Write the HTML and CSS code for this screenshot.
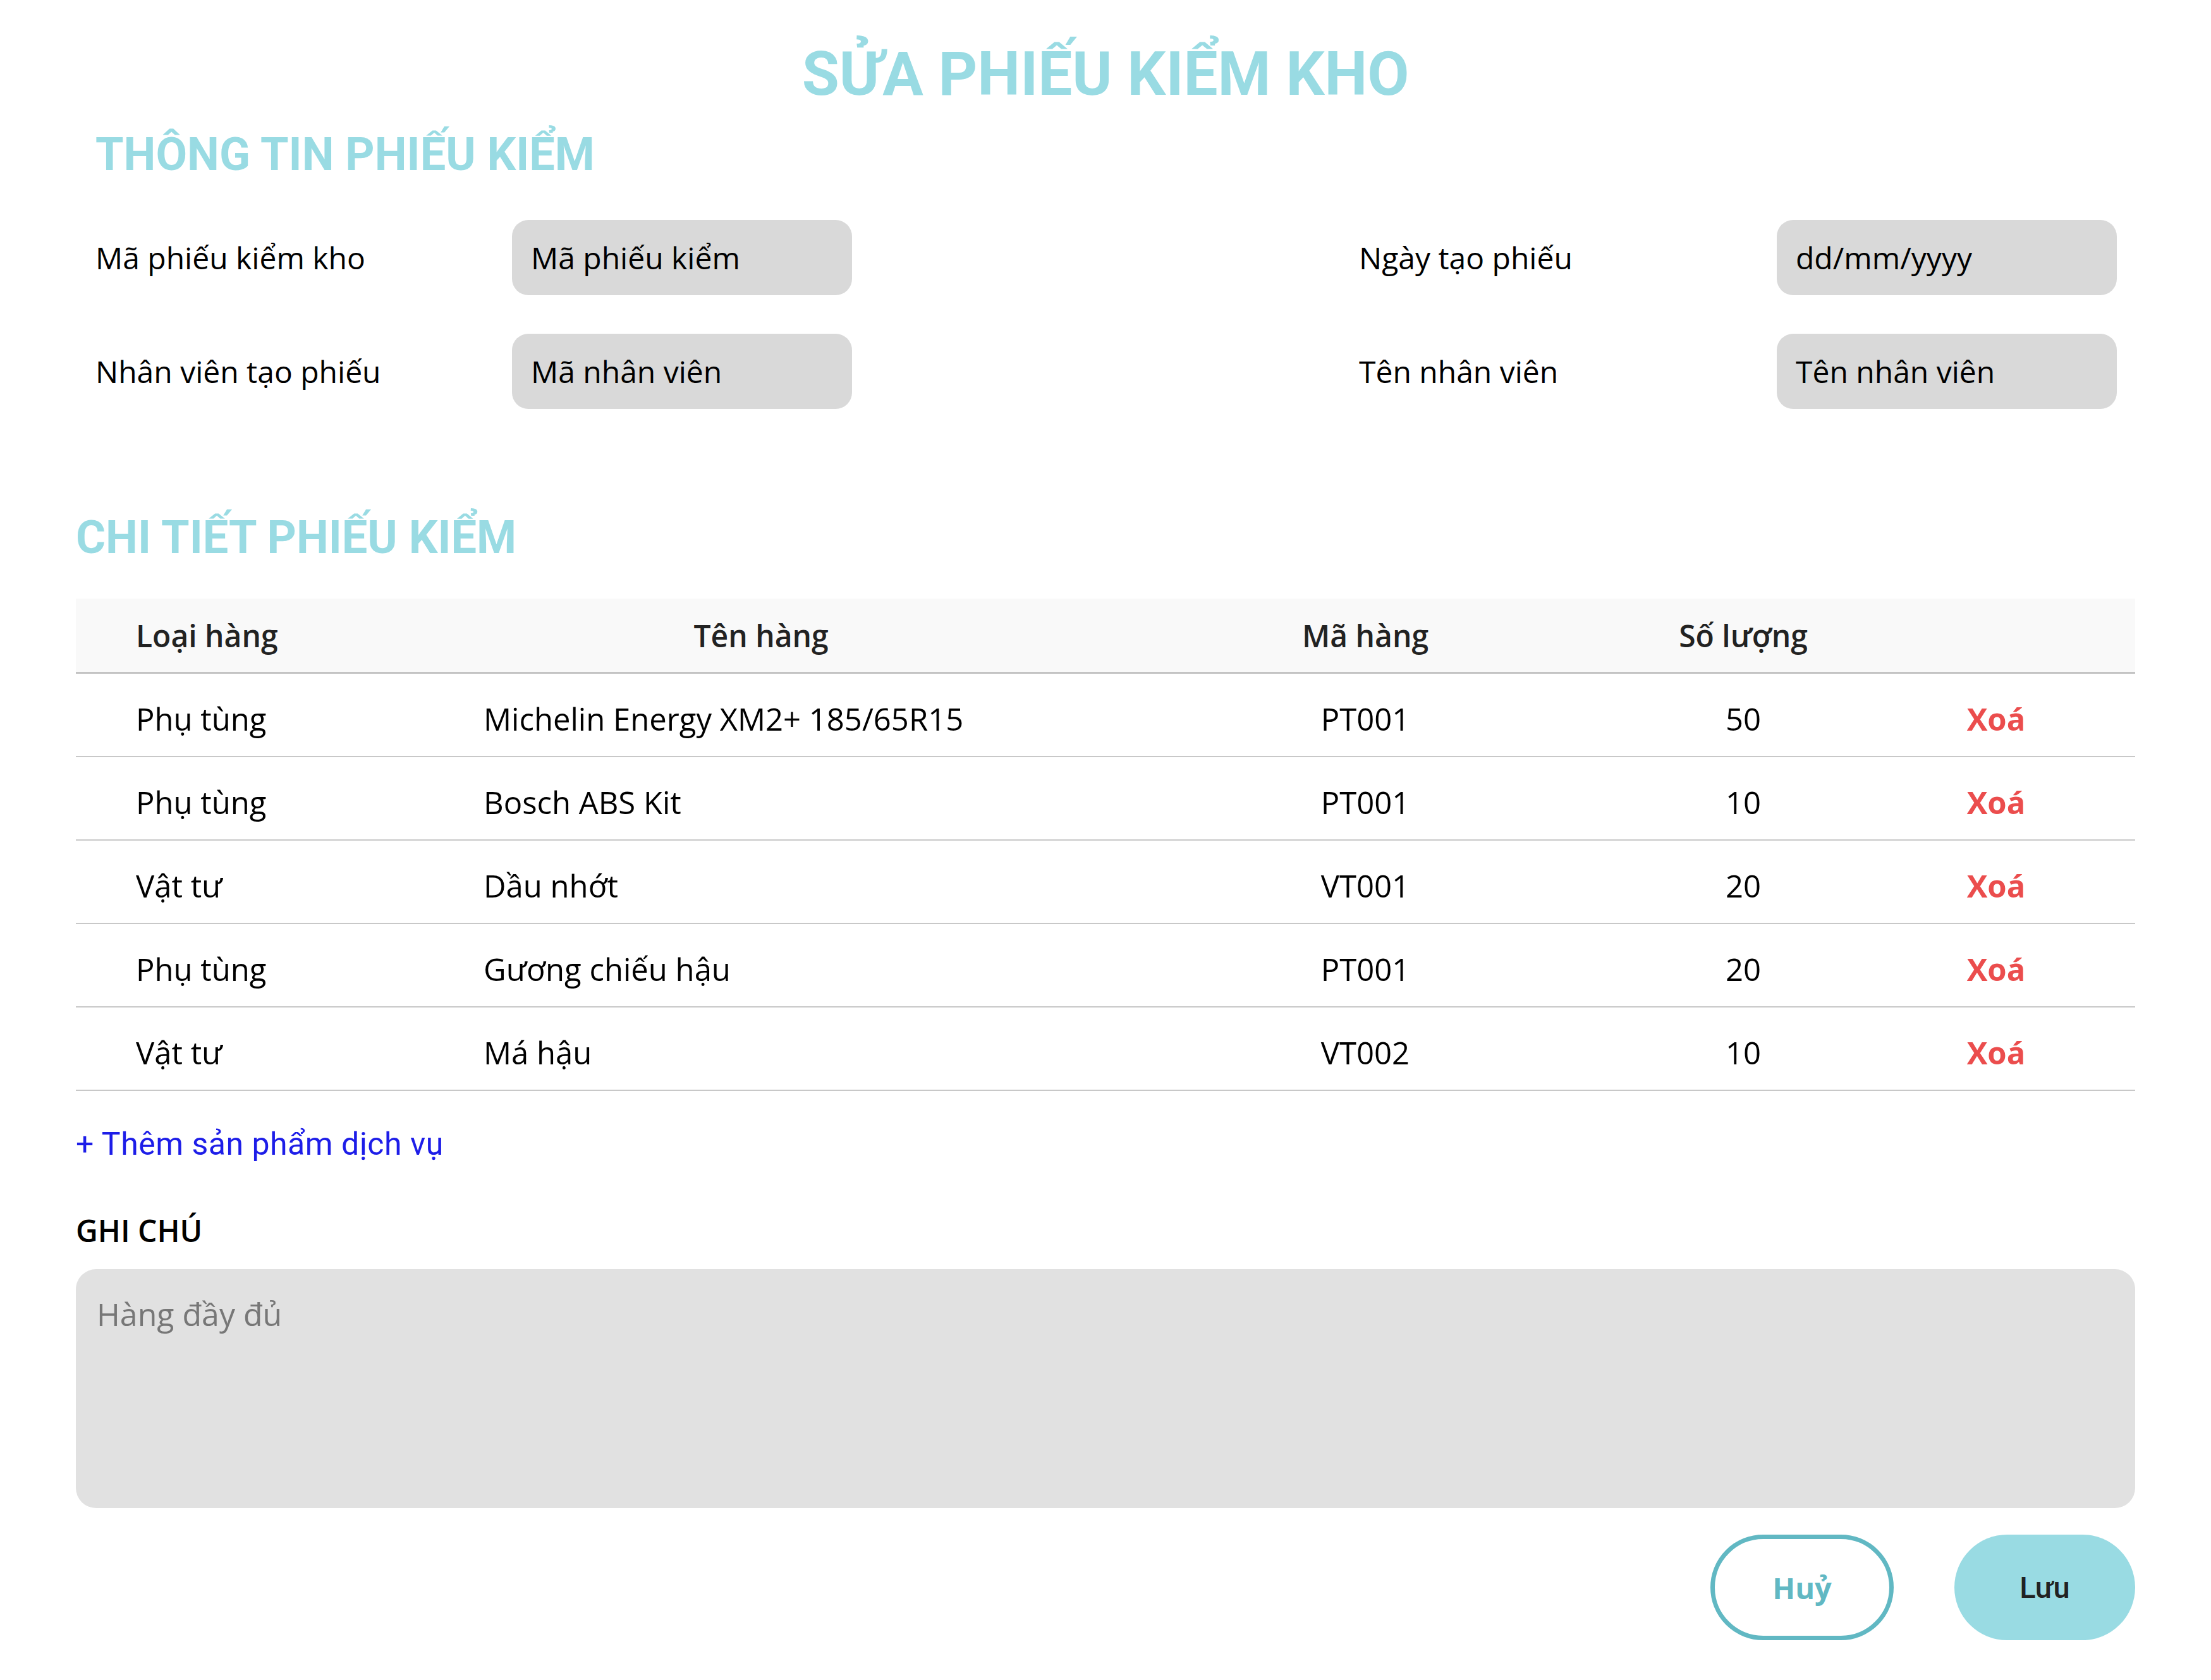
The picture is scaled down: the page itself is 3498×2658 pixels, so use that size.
FILE: index.html
```html
<!DOCTYPE html>
<html lang="vi">
<head>
<meta charset="utf-8">
<title>Sửa phiếu kiểm kho</title>
<link rel="stylesheet" href="styles.css">
</head>
<body>
<main class="page">
  <h1 class="page-title">SỬA PHIẾU KIỂM KHO</h1>

  <section class="info">
    <h2 class="section-title info-title">THÔNG TIN PHIẾU KIỂM</h2>
    <div class="info-grid">
      <label class="field-label">Mã phiếu kiểm kho</label>
      <input class="field-input" type="text" placeholder="Mã phiếu kiểm">
      <span class="spacer"></span>
      <label class="field-label">Ngày tạo phiếu</label>
      <input class="field-input" type="text" placeholder="dd/mm/yyyy">

      <label class="field-label">Nhân viên tạo phiếu</label>
      <input class="field-input" type="text" placeholder="Mã nhân viên">
      <span class="spacer"></span>
      <label class="field-label">Tên nhân viên</label>
      <input class="field-input" type="text" placeholder="Tên nhân viên">
    </div>
  </section>

  <section class="detail">
    <h2 class="section-title">CHI TIẾT PHIẾU KIỂM</h2>
    <div class="table">
      <div class="row head">
        <div class="cell c-type">Loại hàng</div>
        <div class="cell c-name head-center">Tên hàng</div>
        <div class="cell c-code">Mã hàng</div>
        <div class="cell c-qty">Số lượng</div>
        <div class="cell c-act"></div>
      </div>
      <div class="row">
        <div class="cell c-type">Phụ tùng</div>
        <div class="cell c-name">Michelin Energy XM2+ 185/65R15</div>
        <div class="cell c-code">PT001</div>
        <div class="cell c-qty">50</div>
        <div class="cell c-act"><a class="delete" href="#">Xoá</a></div>
      </div>
      <div class="row">
        <div class="cell c-type">Phụ tùng</div>
        <div class="cell c-name">Bosch ABS Kit</div>
        <div class="cell c-code">PT001</div>
        <div class="cell c-qty">10</div>
        <div class="cell c-act"><a class="delete" href="#">Xoá</a></div>
      </div>
      <div class="row">
        <div class="cell c-type">Vật tư</div>
        <div class="cell c-name">Dầu nhớt</div>
        <div class="cell c-code">VT001</div>
        <div class="cell c-qty">20</div>
        <div class="cell c-act"><a class="delete" href="#">Xoá</a></div>
      </div>
      <div class="row">
        <div class="cell c-type">Phụ tùng</div>
        <div class="cell c-name">Gương chiếu hậu</div>
        <div class="cell c-code">PT001</div>
        <div class="cell c-qty">20</div>
        <div class="cell c-act"><a class="delete" href="#">Xoá</a></div>
      </div>
      <div class="row">
        <div class="cell c-type">Vật tư</div>
        <div class="cell c-name">Má hậu</div>
        <div class="cell c-code">VT002</div>
        <div class="cell c-qty">10</div>
        <div class="cell c-act"><a class="delete" href="#">Xoá</a></div>
      </div>
    </div>

    <a class="add-link" href="#">+ Thêm sản phẩm dịch vụ</a>

    <h3 class="note-title">GHI CHÚ</h3>
    <textarea class="note" placeholder="Hàng đầy đủ"></textarea>

    <div class="actions">
      <button class="btn btn-cancel" type="button">Huỷ</button>
      <button class="btn btn-save" type="button">Lưu</button>
    </div>
  </section>
</main>
</body>
</html>
```

FILE: styles.css
```css
* { box-sizing: border-box; }

html, body {
  margin: 0;
  padding: 0;
  background: #ffffff;
}

body {
  font-family: "Open Sans", "Noto Sans", sans-serif;
  color: #000;
}

.page {
  padding: 0 120px;
}

.page-title {
  margin: 0;
  padding-top: 61px;
  font-family: Roboto, "Noto Sans", sans-serif;
  font-weight: 700;
  font-size: 96px;
  line-height: 112px;
  color: #99dbe3;
  text-align: center;
}

.section-title {
  margin: 0;
  font-family: Roboto, "Noto Sans", sans-serif;
  font-weight: 700;
  font-size: 72px;
  line-height: 86px;
  color: #99dbe3;
}

.info {
  padding: 0 29px 0 31px;
  margin-top: 29px;
}

.info-grid {
  margin-top: 60px;
  display: grid;
  grid-template-columns: 659px 538px 1fr 661px 538px;
  grid-auto-rows: 119px;
  row-gap: 61px;
  align-items: center;
}

.field-label {
  font-size: 48px;
  line-height: 64px;
  color: #000;
}

.field-input {
  width: 100%;
  height: 119px;
  border: none;
  outline: none;
  border-radius: 26px;
  background: #d9d9d9;
  padding: 0 30px;
  font-family: "Open Sans", "Noto Sans", sans-serif;
  font-size: 48px;
  color: #000;
}

.field-input::placeholder {
  color: #000;
  opacity: 1;
}

.detail {
  margin-top: 161px;
}

.table {
  margin-top: 53px;
}

.row {
  display: grid;
  grid-template-columns: 600px 968px 944px 252px 1fr;
  align-items: center;
  height: 132px;
  padding-top: 12px;
  border-bottom: 2px solid #c8c8c8;
  font-size: 49px;
}

.row.head {
  height: 119px;
  padding-top: 0;
  background: #f9f9f9;
  border-bottom: 3px solid #c4c4c4;
  font-size: 48px;
  font-weight: 600;
  color: #222;
}

.cell {
  white-space: nowrap;
}

.c-type { padding-left: 95px; }
.c-name { padding-left: 45px; }
.c-name.head-center { padding-left: 0; text-align: center; }
.c-code { text-align: center; }
.c-qty { text-align: center; }
.c-act { text-align: center; padding-left: 54px; }

.delete {
  color: #eb4d4d;
  font-weight: 700;
  text-decoration: none;
}

.add-link {
  display: block;
  margin-top: 55px;
  font-family: Roboto, "Noto Sans", sans-serif;
  font-size: 50px;
  line-height: 58px;
  color: #1d1de8;
  text-decoration: none;
  letter-spacing: 0.5px;
}

.note-title {
  margin: 80px 0 0;
  font-size: 48px;
  line-height: 56px;
  font-weight: 600;
  color: #000;
}

.note {
  display: block;
  width: 100%;
  height: 378px;
  margin-top: 33px;
  border: none;
  outline: none;
  resize: none;
  border-radius: 32px;
  background: #e1e1e1;
  padding: 38px 33px;
  font-family: "Open Sans", "Noto Sans", sans-serif;
  font-size: 50px;
  font-weight: 500;
  line-height: 66px;
  color: #000;
}

.note::placeholder {
  color: #777;
  opacity: 1;
}

.actions {
  margin-top: 42px;
  display: flex;
  justify-content: flex-end;
  gap: 96px;
}

.btn {
  height: 167px;
  border-radius: 84px;
  font-size: 47px;
  cursor: pointer;
}

.btn-cancel {
  width: 290px;
  background: #fff;
  border: 7px solid #61b8c3;
  color: #61b8c3;
  font-family: "Open Sans", "Noto Sans", sans-serif;
  font-weight: 700;
}

.btn-save {
  width: 286px;
  background: #99dbe3;
  border: none;
  color: #222;
  font-family: Roboto, "Noto Sans", sans-serif;
  font-weight: 500;
}
```
